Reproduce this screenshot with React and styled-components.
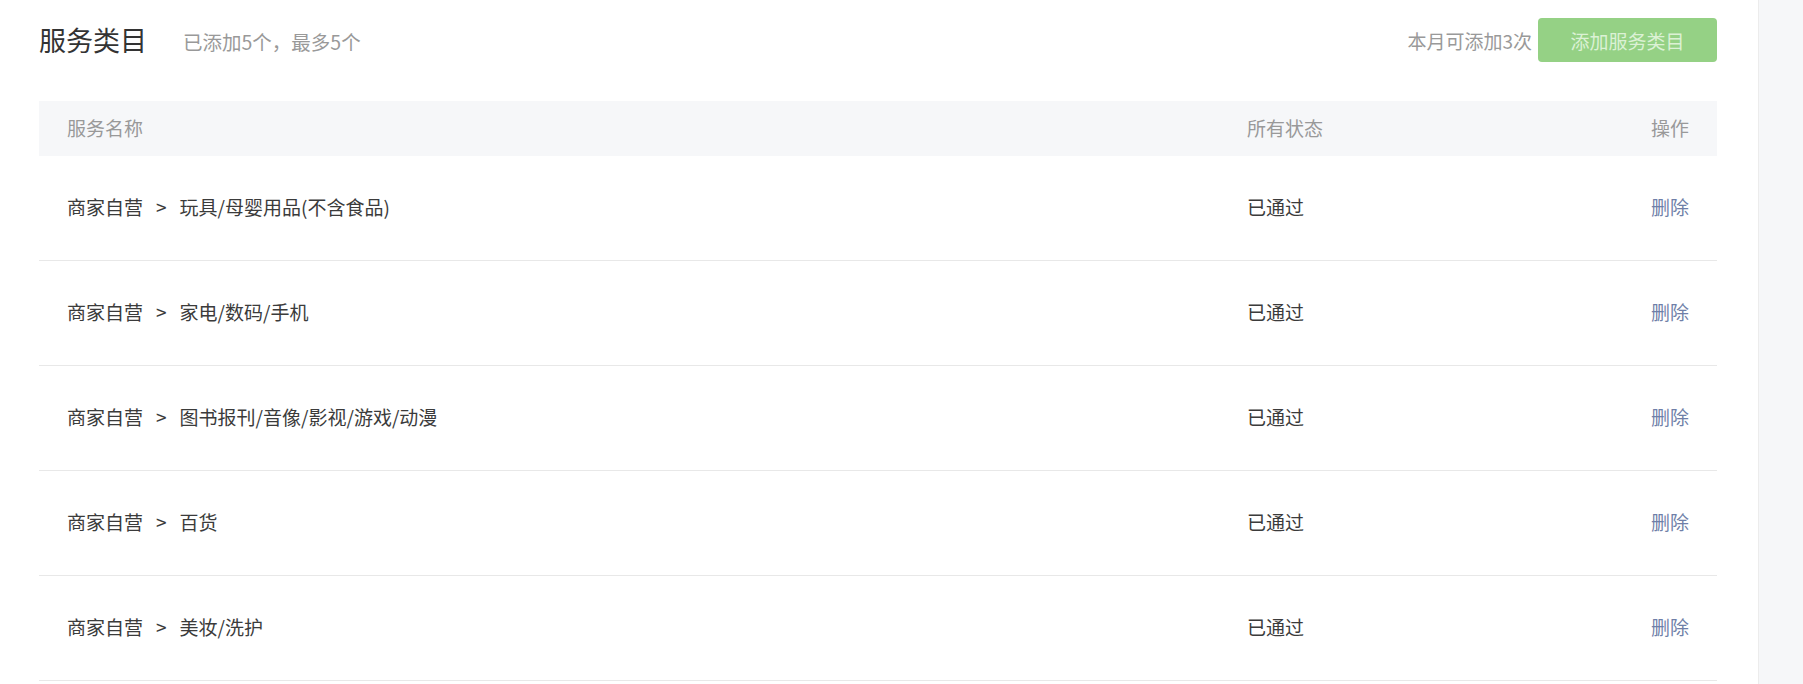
import React from 'react';
import styled, { createGlobalStyle } from 'styled-components';

const GlobalStyle = createGlobalStyle`
  body {
    margin: 0;
    background: #fff;
    font-family: "Noto Sans CJK SC", "Noto Sans", sans-serif;
    color: #333;
  }
`;

const Page = styled.div`
  display: flex;
  min-height: 684px;
`;

const Main = styled.main`
  flex: 1;
  padding: 18px 41px 0 39px;
`;

const Sidebar = styled.aside`
  width: 44px;
  background: #f6f7f9;
  border-left: 1px solid #ececec;
`;

const TopBar = styled.div`
  display: flex;
  align-items: center;
  height: 44px;
  margin-bottom: 39px;
`;

const Title = styled.h1`
  margin: 0;
  font-size: 27px;
  font-weight: 400;
  color: #333;
  line-height: 44px;
`;

const Hint = styled.span`
  margin-left: 36px;
  font-size: 19.5px;
  color: #999;
  line-height: 44px;
  padding-top: 4px;
`;

const Quota = styled.span`
  margin-left: auto;
  font-size: 19px;
  color: #999;
`;

const AddButton = styled.button`
  margin-left: 6px;
  width: 179px;
  height: 44px;
  border: none;
  border-radius: 4px;
  background: #95d185;
  color: #dcf1d5;
  font-family: inherit;
  font-size: 19px;
  cursor: not-allowed;
`;

const Row = styled.div`
  display: grid;
  grid-template-columns: 1180px 1fr auto;
  align-items: center;
  padding: 0 28px 3px;
  height: ${({ $head }) => ($head ? '55px' : '104px')};
  box-sizing: border-box;
  background: ${({ $head }) => ($head ? '#f6f7f9' : '#fff')};
  border-bottom: ${({ $head }) => ($head ? 'none' : '1px solid #e8e8e8')};
  font-size: 19px;
  color: ${({ $head }) => ($head ? '#999' : '#3b3b3b')};
  ${({ $head }) => !$head && 'height: 105px;'}
`;

const Sep = styled.span`
  margin: 0 13px;
`;

const Action = styled.a`
  color: #6f7fa8;
  cursor: pointer;
`;

const items = [
  '玩具/母婴用品(不含食品)',
  '家电/数码/手机',
  '图书报刊/音像/影视/游戏/动漫',
  '百货',
  '美妆/洗护',
];

export default function App() {
  return (
    <>
      <GlobalStyle />
      <Page>
        <Main>
          <TopBar>
            <Title>服务类目</Title>
            <Hint>已添加5个，最多5个</Hint>
            <Quota>本月可添加3次</Quota>
            <AddButton disabled>添加服务类目</AddButton>
          </TopBar>
          <Row $head>
            <span>服务名称</span>
            <span>所有状态</span>
            <span>操作</span>
          </Row>
          {items.map((name) => (
            <Row key={name}>
              <span>
                商家自营<Sep>&gt;</Sep>{name}
              </span>
              <span>已通过</span>
              <Action>删除</Action>
            </Row>
          ))}
        </Main>
        <Sidebar />
      </Page>
    </>
  );
}
